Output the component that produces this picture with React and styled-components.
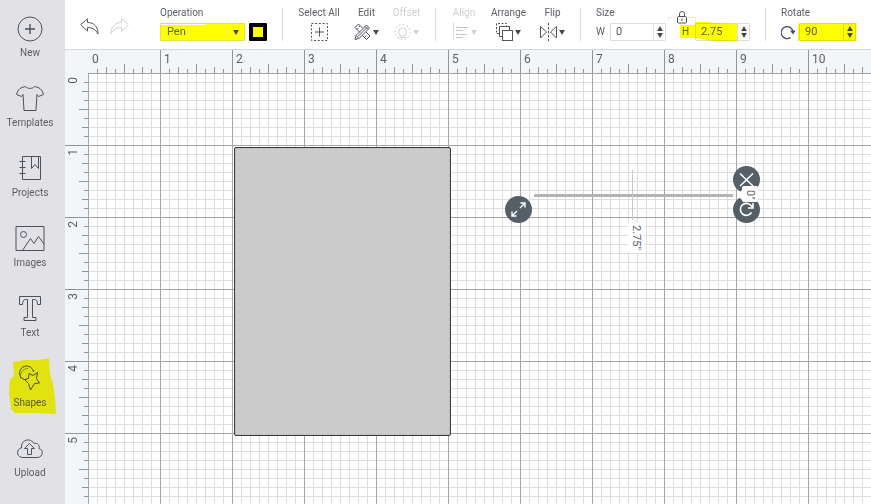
import React, { useEffect, useState } from 'react';
import styled, { createGlobalStyle } from 'styled-components';

const INCH = 72;

const GlobalStyle = createGlobalStyle`
* {
  box-sizing: border-box;
}

body {
  margin: 0;
  font-family: Roboto, "Liberation Sans", sans-serif;
  font-size: 10px;
  line-height: 12px;
  color: #5a5e63;
}

button, input, select {
  font: inherit;
  color: inherit;
}

button {
  padding: 0;
  border: 0;
  background: none;
  cursor: pointer;
}
`

const Page = styled.div`
display: flex;
height: 100vh;
overflow: hidden;
background: #fff;
`

const Sidebar = styled.nav`
flex: none;
width: 65px;
background: #e2e2e6;
`

const NavButton = styled.button`
position: relative;
display: flex;
flex-direction: column;
align-items: center;
gap: 4px;
width: 60px;
height: 70px;
padding-top: 15px;

> svg {
  fill: none;
  stroke: #4a525c;
}
`

const Marker = styled.svg`
position: absolute;
left: 0;
top: 0;
mix-blend-mode: multiply;
pointer-events: none;

&& {
  fill: #ffff00;
  stroke: none;
}
`

const Main = styled.main`
flex: 1;
min-width: 0;
display: flex;
flex-direction: column;
`

const Toolbar = styled.header`
display: flex;
height: 50px;
flex: none;
border-bottom: 1px solid #d3d6d9;
`

const Group = styled.div`
position: relative;
display: flex;
flex: none;
gap: ${props => props.$gap || 14}px;
padding: 7px 15px 0;

& + &::before {
  content: "";
  position: absolute;
  left: 0;
  top: 8px;
  width: 1px;
  height: 33px;
  background: #dcdcdc;
}

& + & {
  padding-left: 16px;
}
`

const ToolButton = styled.button`
display: flex;
flex-direction: column;
align-items: center;
gap: 4px;
width: ${props => props.$width}px;
white-space: nowrap;
height: 34px;
color: ${props => props.disabled ? '#d0d0d0' : 'inherit'};
`

const Field = styled.div`
position: relative;
display: flex;
flex-direction: column;
gap: 4px;
`

const Row = styled.div`
display: flex;
align-items: center;
height: 18px;
gap: ${props => props.$gap || 0}px;
`

const Unit = styled.label`
width: ${props => props.$width}px;
`

const SelectBox = styled.div`
display: grid;
width: 85px;
height: 18px;
border: 1px solid #e2e24a;
background: linear-gradient(#fff 1px, #ff0 1px) left top / 44px 100% no-repeat #ff0;

> * {
  grid-area: 1 / 1;
}

svg {
  place-self: center end;
  margin-right: 5px;
  pointer-events: none;
}
`

const Select = styled.select`
appearance: none;
width: 100%;
border: 0;
padding: 0 6px;
background: transparent;
font-size: 11px;
outline: none;
`

const Swatch = styled.button`
width: 18px;
height: 18px;
border: 4px solid #000;
border-radius: 1px;
background: #ff0;
`

const NumberBox = styled.div`
display: flex;
width: ${props => props.$width}px;
height: 18px;
border: 1px solid #dedede;
border-radius: 1px;
`

const NumberInput = styled.input`
flex: 1;
min-width: 0;
border: 0;
padding: 0 0 0 5px;
background: transparent;
font-size: 11px;
outline: none;
`

const Stepper = styled.div`
display: flex;
flex-direction: column;
justify-content: center;
align-items: center;
gap: 2px;
width: 12px;
border-left: 1px solid #e2e2e2;

button {
  display: flex;
}
`

const Lock = styled.button`
position: absolute;
left: 72px;
top: 3px;
`

const Workspace = styled.div`
flex: 1;
min-height: 0;
display: grid;
grid-template-columns: 23px 1fr;
grid-template-rows: 23px 1fr;
background: #f3f6f9;
`

const Corner = styled.div``

const TopRuler = styled.div`
display: flex;
min-width: 0;
overflow: hidden;
`

const SideRuler = styled.div`
min-height: 0;
overflow: hidden;
`

const tickX = 'linear-gradient(to right, #8f959a 1px, transparent 1px)';
const tickY = 'linear-gradient(#8f959a 1px, transparent 1px)';

const TopMark = styled.div`
flex: none;
width: 72px;
height: 23px;
padding: 3px 0 0 4px;
font-size: 12px;
background:
  ${props => props.$first ? '' : `${tickX} 0 0 / 72px 100% no-repeat,`}
  ${tickX} 36px 100% / 36px 9px no-repeat,
  ${tickX} 18px 100% / 18px 6px no-repeat,
  ${tickX} 54px 100% / 18px 6px no-repeat,
  ${tickX} 9px 100% / 9px 4px no-repeat,
  ${tickX} 27px 100% / 9px 4px no-repeat,
  ${tickX} 45px 100% / 9px 4px no-repeat,
  ${tickX} 63px 100% / 9px 4px no-repeat;
`

const SideMark = styled.div`
width: 23px;
height: 72px;
padding: 4px 0 0 2px;
font-size: 12px;
background:
  ${props => props.$first ? '' : `${tickY} 0 0 / 100% 72px no-repeat,`}
  ${tickY} 100% 36px / 9px 36px no-repeat,
  ${tickY} 100% 18px / 6px 18px no-repeat,
  ${tickY} 100% 54px / 6px 18px no-repeat,
  ${tickY} 100% 9px / 4px 9px no-repeat,
  ${tickY} 100% 27px / 4px 9px no-repeat,
  ${tickY} 100% 45px / 4px 9px no-repeat,
  ${tickY} 100% 63px / 4px 9px no-repeat;

span {
  display: block;
  width: 12px;
  writing-mode: vertical-rl;
  transform: rotate(180deg);
}
`

const Canvas = styled.div`
position: relative;
overflow: hidden;
background:
  linear-gradient(to right, #a5a5a5 1px, transparent 1px) 0 0 / 72px 72px,
  linear-gradient(#a5a5a5 1px, transparent 1px) 0 0 / 72px 72px,
  linear-gradient(to right, #dedede 1px, transparent 1px) 0 0 / 9px 9px,
  linear-gradient(#dedede 1px, transparent 1px) 0 0 / 9px 9px,
  #fff;
`

// objects that sit freely on the canvas
const Placed = styled.div`
position: absolute;
left: ${props => props.$x}px;
top: ${props => props.$y}px;
`

const Card = styled(Placed)`
width: ${INCH * 3 + 1}px;
height: ${INCH * 4 + 1}px;
border: 1px solid #3c3c3c;
border-radius: 2px;
background: #cbcbcb;
box-shadow: inset 0 0 1px #555;
`

const PenLine = styled(Placed)`
width: 199px;
height: 3px;
background: #b4b4b4;
`

const Guide = styled(Placed)`
width: 1px;
height: 50px;
background: #c8c8c8;
`

const Dimension = styled(Placed)`
padding: ${props => props.$tight ? '4px 2px 2px' : '3px 2px'};
border-radius: 2px;
background: #fff;
font-size: 11px;
writing-mode: vertical-rl;
`

const Pointer = styled(Placed)`
border: 5px solid transparent;
border-right-color: #fff;
border-left: 0;
`

const Handle = styled.button`
position: absolute;
left: ${props => props.$x}px;
top: ${props => props.$y}px;
width: 27px;
height: 27px;
border-radius: 50%;
background: #555f68;

svg {
  display: block;
  fill: none;
  stroke: #fff;
}
`

function Caret({ size = 7, color = '#44484c', up }) {
  return (
    <svg width={size} height={size - 1} viewBox="0 0 7 6" fill={color}>
      <path d={up ? 'M0 6L3.5 0L7 6z' : 'M0 0H7L3.5 6z'} />
    </svg>
  );
}

const navItems = [
  {
    label: 'New',
    icon: <><circle cx="14" cy="14" r="12" /><path d="M14 9v10M9 14h10" strokeWidth="1.4" /></>
  },
  {
    label: 'Templates',
    icon: <path d="M9.500 1.500C11 4 17 4 18.500 1.500L22 2.500C25 3.500 26.500 6 27.500 9.500L22.500 11.500L21 9.500L20 25.500H8L7 9.500L5.500 11.500L.5 9.500C1.500 6 3 3.500 6 2.500z" />
  },
  {
    label: 'Projects',
    icon: <path d="M6.500 1.500h18v23h-18zM15.500 1.500v12l3.500-4 3.500 4v-12M3.500 6.500h6M3.500 12.500h6M3.500 18.500h6" />
  },
  {
    label: 'Images',
    icon: <><rect x="0" y="1.500" width="28" height="24" /><circle cx="7.500" cy="9.500" r="3" /><path d="M6.500 25.500L14.500 13.500L18 18.500L22.500 11.500L28 19" /></>
  },
  {
    label: 'Text',
    icon: <path d="M3.500 1.500h21v8h-3c0-3-1-5-3-5h-2v18h3.500v3h-12v-3h3.500v-18h-2c-2 0-3 2-3 5h-3z" />
  },
  {
    label: 'Shapes',
    icon: <><path d="M10.500 14.500H8A7 7 0 1 1 17.500 7" /><path d="M4.500 13.500C3.500 8 7 3.500 12 3.500M17 7l1.500-1.500" strokeWidth=".6" /><path d="M13 8.500L17 10.500L21.500 7.500L20.500 13.500L23.500 18L18.500 18.500L14.500 25L12.500 18.500L8.500 14.500L12.500 13.500z" /></>
  },
  {
    label: 'Upload',
    icon: <><path d="M7 22.500C-.5 22.500 .5 13 5.500 13C4.500 4 15 2.500 18 8.500C22 7.500 24 11 23 13.500C28 14.500 27 22.500 21.500 22.500z" /><path d="M13.500 8.500l5 5h-3v6h-4v-6h-3z" /></>
  }
];

function NavIcon({ children }) {
  return (
    <svg width="30" height="28" viewBox="-1 0 30 28" strokeLinejoin="round">{children}</svg>
  );
}

function ToolIcon({ children, width = 17, stroke = '#50555a' }) {
  return (
    <svg width={width} height="18" viewBox={`0 0 ${width} 18`} fill="none" stroke={stroke}>{children}</svg>
  );
}

function Arrow({ stroke, flip }) {
  return (
    <svg width="19" height="34" viewBox="0 0 19 34" fill="none" stroke={stroke} strokeLinejoin="round">
      <path
        transform={flip ? 'translate(19 0) scale(-1 1)' : undefined}
        d="M.7 14.500L7.500 9V12.500C14 12.500 18 16.500 18 24C15.500 19 12 17.500 7.500 17.500V21z"
      />
    </svg>
  );
}

function NumberField({ id, width, value, onChange, label }) {
  function step(amount) {
    onChange(String((Number(value) || 0) + amount));
  }

  return (
    <NumberBox $width={width}>
      <NumberInput
        id={id}
        aria-label={label}
        value={value}
        onChange={event => onChange(event.target.value)}
      />
      <Stepper>
        <button aria-label={`Increase ${label}`} onClick={() => step(1)}><Caret size={6} up /></button>
        <button aria-label={`Decrease ${label}`} onClick={() => step(-1)}><Caret size={6} /></button>
      </Stepper>
    </NumberBox>
  );
}

function SideNav() {
  return (
    <Sidebar>
      {navItems.map(item => (
        <NavButton key={item.label}>
          <NavIcon>{item.icon}</NavIcon>
          {item.label}
          {item.label === 'Shapes' && (
            <Marker width="60" height="70" viewBox="0 0 60 70">
              <path d="M13 12L25 10L36 10L49 8.500L50 24L53 34L55 48L56 64L37 63L15 63L11 59L9 42L10 29L14 26z" opacity=".93" />
            </Marker>
          )}
        </NavButton>
      ))}
    </Sidebar>
  );
}

function EditBar() {
  const [operation, setOperation] = useState('Pen');
  const [width, setWidth] = useState('0');
  const [height, setHeight] = useState('2.75');
  const [angle, setAngle] = useState('90');

  return (
    <Toolbar>
      <Group $gap={11}>
        <button aria-label="Undo"><Arrow stroke="#55595e" /></button>
        <button aria-label="Redo" disabled><Arrow stroke="#d0d0d0" flip /></button>
      </Group>
      <Group>
        <Field>
          <label htmlFor="operation">Operation</label>
          <Row $gap={4}>
            <SelectBox>
              <Select id="operation" value={operation} onChange={event => setOperation(event.target.value)}>
                <option>Pen</option>
                <option>Basic Cut</option>
                <option>Score</option>
              </Select>
              <Caret size={6} />
            </SelectBox>
            <Swatch aria-label="Pen colour" />
          </Row>
        </Field>
      </Group>
      <Group>
        <ToolButton $width={42}>
          Select All
          <ToolIcon>
            <rect x=".5" y=".5" width="16" height="17" strokeDasharray="2 1.700" />
            <path d="M8.500 4.500v9M4 9h9" />
          </ToolIcon>
        </ToolButton>
        <ToolButton $width={25}>
          Edit
          <Row $gap={2}>
            <ToolIcon>
              <path d="M1 16.500L2 12.500L12.500 2L15.500 5L5 15.500zM2 12.500L5 15.500M11 3.500L14 6.500M4 13.500L13.500 4" />
              <path d="M6 9.500L1 4.500L4.500 1L9 5.500M8.500 12.500L12.500 16.500L16 13L12 9M3 6.500l1.500-1.500M5 3l1 1M11 14l1.500-1.500M13 16l1-1" />
            </ToolIcon>
            <Caret size={6} />
          </Row>
        </ToolButton>
        <ToolButton $width={27} disabled>
          Offset
          <Row $gap={2}>
            <ToolIcon stroke="#d0d0d0">
              <circle cx="8.500" cy="9" r="4" />
              <path d="M5 14.500h7" />
              <circle cx="8.500" cy="9" r="7.500" strokeDasharray="2 1.900" />
            </ToolIcon>
            <Caret size={6} color="#d0d0d0" />
          </Row>
        </ToolButton>
      </Group>
      <Group>
        <ToolButton $width={26} disabled>
          Align
          <Row $gap={2}>
            <ToolIcon stroke="#c8c8c8">
              <path d="M1.500 0v18" strokeDasharray="1.500 1" />
              <path d="M4 4.500h12M4 7.500h7M4 11.500h11M4 14.500h7" />
            </ToolIcon>
            <Caret size={6} color="#d0d0d0" />
          </Row>
        </ToolButton>
        <ToolButton $width={35}>
          Arrange
          <Row $gap={2}>
            <ToolIcon>
              <path d="M3 10.500H.5V.5H10.500V3" strokeDasharray="2 1.500" />
              <path d="M6 13.500H3.500V3.500H13.500V7" />
              <rect x="6.500" y="7.500" width="10" height="10" />
            </ToolIcon>
            <Caret size={6} />
          </Row>
        </ToolButton>
        <ToolButton $width={25}>
          Flip
          <Row $gap={2}>
            <ToolIcon>
              <path d="M.5 3.500L6.500 9L.5 15zM16.500 3.500L10.500 9L16.500 15z" />
              <path d="M8.500 0v18" strokeDasharray="2.500 1.500" />
            </ToolIcon>
            <Caret size={6} />
          </Row>
        </ToolButton>
      </Group>
      <Group>
        <Field>
          <span>Size</span>
          <Row>
            <Unit $width={14} htmlFor="width">W</Unit>
            <NumberField id="width" label="Width" width={56} value={width} onChange={setWidth} />
            <Row $gap={16}>
              <span />
              <Unit $width={13} htmlFor="height">H</Unit>
            </Row>
            <NumberField id="height" label="Height" width={55} value={height} onChange={setHeight} />
          </Row>
          <Lock aria-label="Lock proportions">
            <svg width="28" height="14" viewBox="0 0 28 14" fill="none" stroke="#50555a">
              <path d="M0 11V7.500H7M21 7.500H27.500V11" stroke="#dcdcdc" strokeDasharray="2 1" />
              <rect x="9.500" y="6.500" width="9" height="6.500" rx="1" />
              <path d="M11.500 6.500V4A2.500 2.500 0 0 1 16.500 4V6.500M14 8.500v2.500" />
            </svg>
          </Lock>
          <Marker width="154" height="38" viewBox="0 0 154 38">
            <path d="M84 18L99 18L99 15L114 15L116 16L141 17L141 34.500L118 34L99 31L84 31z" />
          </Marker>
        </Field>
      </Group>
      <Group>
        <Field>
          <span>Rotate</span>
          <Row $gap={4}>
            <ToolIcon width={14} stroke="#454a66">
              <path d="M9.500 14.500A6 6 0 1 1 12 8.500" strokeWidth="1.300" />
              <path d="M9 7.500H14.500L12 11.500z" fill="#454a66" stroke="none" />
            </ToolIcon>
            <NumberField id="rotate" label="Rotate" width={57} value={angle} onChange={setAngle} />
          </Row>
          <Marker width="76" height="38" viewBox="0 0 76 38">
            <path d="M17 16.500L76 16L75 34L17 34z" />
          </Marker>
        </Field>
      </Group>
    </Toolbar>
  );
}

// one mark for every inch of canvas that is on screen
function countMarks() {
  return {
    across: Math.ceil((window.innerWidth - 88) / INCH),
    down: Math.ceil((window.innerHeight - 73) / INCH)
  };
}

function marks(count) {
  return Array.from({ length: Math.max(count, 1) }, (_, i) => i);
}

function DesignArea() {
  const [count, setCount] = useState(countMarks);

  useEffect(() => {
    const handleResize = () => setCount(countMarks());
    window.addEventListener('resize', handleResize);
    return () => window.removeEventListener('resize', handleResize);
  }, []);

  return (
    <Workspace>
      <Corner />
      <TopRuler>
        {marks(count.across).map(mark => <TopMark key={mark} $first={mark === 0}>{mark}</TopMark>)}
      </TopRuler>
      <SideRuler>
        {marks(count.down).map(mark => <SideMark key={mark} $first={mark === 0}><span>{mark}</span></SideMark>)}
      </SideRuler>
      <Canvas>
        <Card $x={146} $y={74} />
        <PenLine $x={446} $y={121} />
        <Guide $x={544} $y={97} />
        <Dimension $x={540} $y={149}>2.75"</Dimension>
        <Handle $x={417} $y={123} aria-label="Resize">
          <svg width="27" height="27" viewBox="0 0 27 27" strokeWidth="1.400">
            <path d="M15 12L20 7M15.500 7H20V11.500M12 15L7 20M7 15.500V20H11.500" />
          </svg>
        </Handle>
        <Handle $x={645} $y={93} aria-label="Delete">
          <svg width="27" height="27" viewBox="0 0 27 27" strokeWidth="1.600">
            <path d="M7 7.500L20 20M20 7.500L7 20" />
          </svg>
        </Handle>
        <Handle $x={645} $y={123} aria-label="Rotate shape">
          <svg width="27" height="27" viewBox="0 0 27 27" strokeWidth="1.600">
            <path d="M18.500 16.500A6 6 0 1 1 17.500 9L20 11.500M20 7V12H15" />
          </svg>
        </Handle>
        <Pointer $x={649} $y={117} />
        <Dimension $x={654} $y={113} $tight>0"</Dimension>
      </Canvas>
    </Workspace>
  );
}

function App() {
  return (
    <Page>
      <GlobalStyle />
      <SideNav />
      <Main>
        <EditBar />
        <DesignArea />
      </Main>
    </Page>
  );
}

export default App;
